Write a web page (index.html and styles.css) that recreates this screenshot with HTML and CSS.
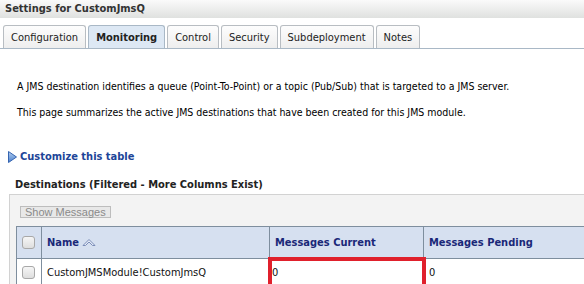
FILE: index.html
```html
<!DOCTYPE html>
<html lang="en">
<head>
    <meta charset="UTF-8">
    <meta name="viewport" content="width=device-width, initial-scale=1.0">
    <title>Settings for CustomJmsQ</title>
    <link rel="stylesheet" href="styles.css">
</head>
<body>
    <div class="title-bar">Settings for CustomJmsQ</div>

    <!-- Tabs -->
    <ul class="tabs">
        <li class="tab">Configuration</li>
        <li class="tab active">Monitoring</li>
        <li class="tab">Control</li>
        <li class="tab">Security</li>
        <li class="tab">Subdeployment</li>
        <li class="tab">Notes</li>
    </ul>

    <div class="content">
        <p class="intro">A JMS destination identifies a queue (Point-To-Point) or a topic (Pub/Sub) that is targeted to a JMS server.</p>
        <p class="intro">This page summarizes the active JMS destinations that have been created for this JMS module.</p>

        <a class="customize" href="#">
            <svg class="arrow" width="9" height="12" viewBox="0 0 9 12">
                <defs>
                    <linearGradient id="g" x1="0" y1="0" x2="0" y2="1">
                        <stop offset="0" stop-color="#b4d0f2"/>
                        <stop offset="1" stop-color="#4a7fcc"/>
                    </linearGradient>
                </defs>
                <path d="M0.5 0.5 L8.5 6 L0.5 11.5 Z" fill="url(#g)" stroke="#3564b0" stroke-width="1"/>
            </svg>
            Customize this table
        </a>

        <h3 class="table-title">Destinations (Filtered - More Columns Exist)</h3>

        <div class="table-box">
            <button class="btn" disabled>Show Messages</button>
            <table class="grid">
                <tr>
                    <th class="check"><span class="box"></span></th>
                    <th class="col-name">Name
                        <svg class="sort" width="14" height="9" viewBox="0 0 14 9">
                            <path d="M1 7.5 L7 1.5 L13 7.5 L10.5 7.5 L7 4 L3.5 7.5 Z" fill="#e4eaf6" stroke="#7b8db8" stroke-width="1" stroke-linejoin="round"/>
                        </svg>
                    </th>
                    <th class="col-current">Messages Current</th>
                    <th>Messages Pending</th>
                </tr>
                <tr>
                    <td class="check"><span class="box"></span></td>
                    <td>CustomJMSModule!CustomJmsQ</td>
                    <td class="marked">0</td>
                    <td>0</td>
                </tr>
            </table>
        </div>
    </div>
</body>
</html>
```

FILE: styles.css
```css
body {
    margin: 0;
    font-family: "DejaVu Sans Condensed", "DejaVu Sans", sans-serif;
    font-stretch: condensed;
    font-size: 11px;
    color: #000;
    background-color: #fff;
    overflow: hidden;
}

.title-bar {
    height: 18px;
    line-height: 18px;
    padding-left: 5px;
    font-size: 11px;
    font-weight: bold;
    color: #333;
    background: linear-gradient(#fafafa, #dfe1df);
}

.tabs {
    display: flex;
    gap: 2px;
    list-style: none;
    margin: 7px 0 0;
    padding: 0 0 0 3px;
    border-bottom: 1px solid #a9b8c6;
}

.tab {
    height: 22px;
    line-height: 23px;
    padding: 0 7px;
    font-size: 11px;
    color: #222;
    border: 1px solid #b8bdc2;
    border-bottom: none;
    border-radius: 3px 3px 0 0;
    background: linear-gradient(#fdfdfd, #eeeeee);
}

.tab.active {
    font-weight: bold;
    background: #dde8f4;
    border-color: #a9b8c6;
}

.content {
    padding: 0;
}

.intro {
    margin: 0;
    padding-left: 17px;
    font-size: 10.5px;
    line-height: 26px;
}

.intro:first-child {
    margin-top: 24px;
}

.customize {
    display: flex;
    align-items: center;
    gap: 3px;
    margin: 25px 0 0 8px;
    font-size: 11px;
    font-weight: bold;
    color: #1d4598;
    text-decoration: none;
}

.table-title {
    margin: 15px 0 0 15px;
    font-size: 11px;
    font-weight: bold;
    color: #222;
}

.table-box {
    margin: 3px 0 0 9px;
    padding: 11px 0 0 6px;
    background-color: #f3f3f3;
    border: 1px solid #d2d2d2;
    border-right: none;
}

.btn {
    display: block;
    margin: 0 0 8px 4px;
    padding: 0 4px;
    height: 12px;
    font-family: "Liberation Sans", Arial, sans-serif;
    font-size: 11px;
    line-height: 10px;
    color: #8a8a8a;
    background-color: #e8e8e8;
    border: 1px solid #bdbdbd;
}

.grid {
    border-collapse: collapse;
    width: 580px;
    background-color: #fff;
}

.grid th, .grid td {
    border: 1px solid #7e8e9e;
    text-align: left;
    padding: 0 5px;
}

.grid th {
    height: 31px;
    background-color: #d6e0f0;
    color: #1a2878;
    font-weight: bold;
}

.grid td {
    height: 26px;
    color: #111;
}

.grid .check {
    width: 14px;
    padding: 0 5px;
}

.col-name {
    width: 217px;
}

.col-current {
    width: 143px;
}

.sort {
    vertical-align: -1px;
}

.box {
    display: block;
    width: 11px;
    height: 11px;
    border: 1px solid #a8a8a8;
    border-radius: 3px;
    background: linear-gradient(#f6f6f6, #dedede);
}

.grid td.marked {
    outline: 4px solid #e0202c;
    outline-offset: -2px;
    padding-left: 2px;
}
```
